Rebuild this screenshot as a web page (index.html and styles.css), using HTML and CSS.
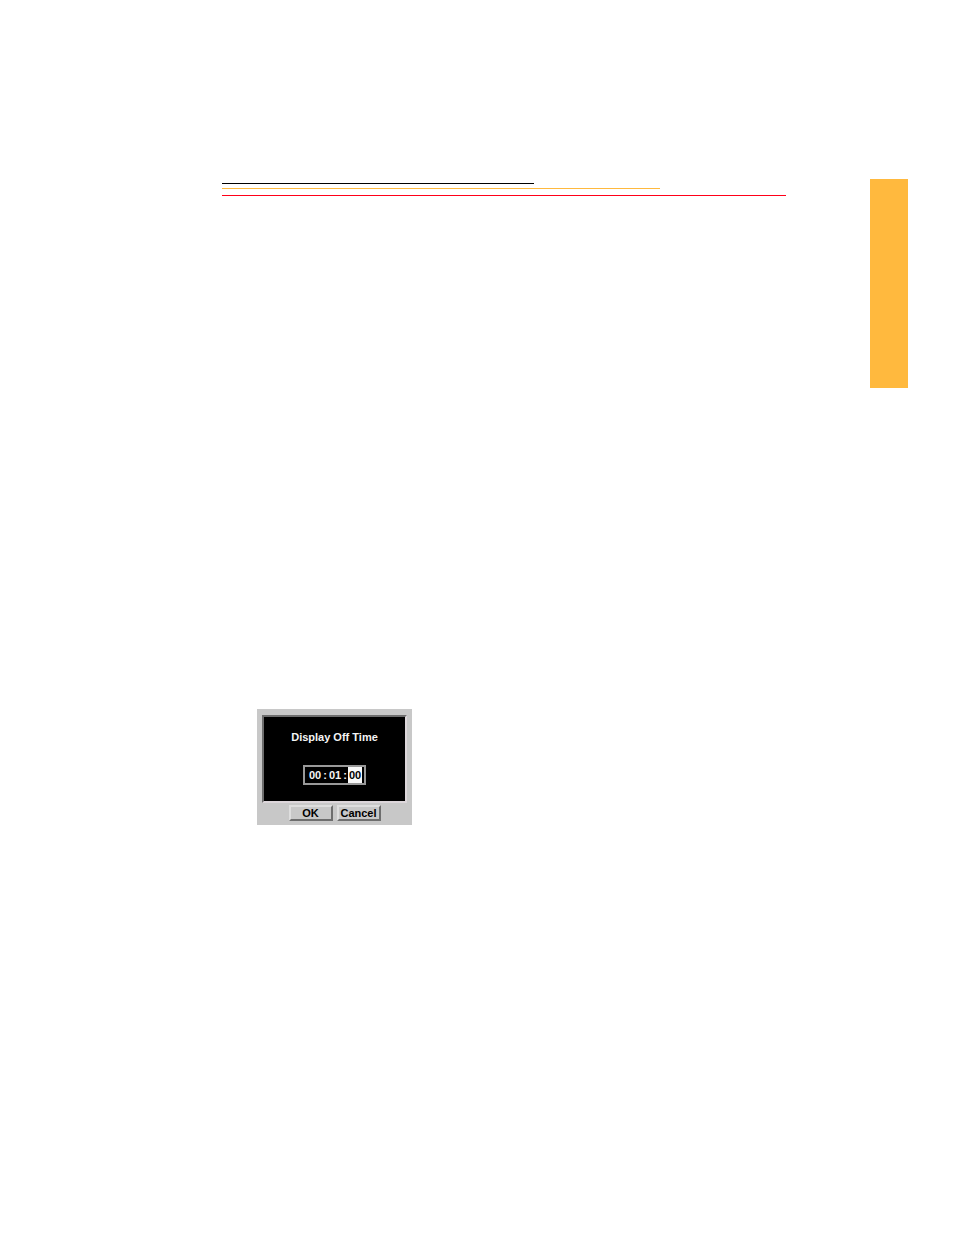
FILE: index.html
```html
<!DOCTYPE html>
<html lang="en">
<head>
  <meta charset="UTF-8" />
  <title>Display Off Time</title>
  <link rel="stylesheet" href="styles.css">
</head>
<body>

  <main class="content">
    <!-- header rules -->
    <div class="rules">
      <div class="rule black"></div>
      <div class="rule gold"></div>
      <div class="rule red"></div>
    </div>

    <!-- camera dialog -->
    <form class="dialog">
      <div class="screen">
        <h2 id="dialog-title">Display Off Time</h2>
        <div class="time" role="group" aria-labelledby="dialog-title">
          <input type="text" value="00" maxlength="2" aria-label="Hours" />
          <span>:</span>
          <input type="text" value="01" maxlength="2" aria-label="Minutes" />
          <span>:</span>
          <input class="selected" type="text" value="00" maxlength="2" aria-label="Seconds" />
        </div>
      </div>
      <div class="buttons">
        <button type="button">OK</button>
        <button type="button">Cancel</button>
      </div>
    </form>
  </main>

  <aside class="tab"></aside>

</body>
</html>
```
FILE: styles.css
```css
* { box-sizing:border-box; }
body {
  margin:0;
  padding:179px 46px 40px 222px;
  min-height:100vh;
  display:flex;
  align-items:flex-start;
  gap:84px;
  font-family:"Liberation Sans", Arial, sans-serif;
  background:#fff;
}
.content { flex:1; }
.rules { padding-top:4px; }
.rule { height:1px; }
.rule.black { width:55.3%; background:#000; }
.rule.gold { width:77.7%; margin-top:4px; background:#ffb93e; }
.rule.red { margin-top:6px; background:#ff0019; }
.tab {
  width:38px;
  height:209px;
  background:#ffb93e;
}

.dialog {
  width:155px;
  margin:513px 0 0 35px;
  padding:6px 5px 4px;
  background:#c8c8c8;
}
.screen {
  height:88px;
  padding-top:13px;
  display:flex;
  flex-direction:column;
  align-items:center;
  gap:21px;
  background:#000;
  border:2px solid;
  border-color:#6e6e6e #dcd6da #dcd6da #6e6e6e;
}
.screen h2 {
  margin:0;
  font-size:11px;
  line-height:14px;
  color:#f4f4f4;
}
.time {
  width:63px;
  height:20px;
  padding-left:3px;
  display:flex;
  align-items:stretch;
  border:2px solid #999;
  background:#000;
  color:#f4f4f4;
  font-size:11px;
  font-weight:bold;
  line-height:16px;
}
.time input {
  width:14px;
  padding:0;
  border:none;
  background:#000;
  color:#f4f4f4;
  font:inherit;
  text-align:center;
  outline:none;
}
.time span {
  width:6px;
  text-align:center;
}
.time input.selected {
  background:#fafafa;
  color:#000;
}
.buttons {
  margin-top:2px;
  display:flex;
  justify-content:center;
  gap:4px;
}
.buttons button {
  width:44px;
  height:16px;
  padding:0 0 2px;
  border:2px solid;
  border-color:#dedede #6e6e6e #6e6e6e #dedede;
  background:#c8c8c8;
  color:#000;
  font-family:inherit;
  font-size:11px;
  font-weight:bold;
  line-height:12px;
}
```
